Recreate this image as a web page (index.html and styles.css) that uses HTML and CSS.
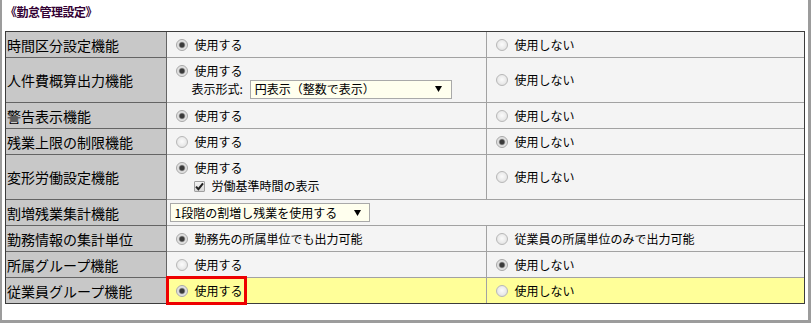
FILE: index.html
```html
<!DOCTYPE html>
<html lang="ja">
<head>
<meta charset="utf-8">
<title>勤怠管理設定</title>
<link rel="stylesheet" href="styles.css">
</head>
<body>
<div class="frame">
  <div class="title">《勤怠管理設定》</div>
  <div class="tablewrap">
    <table class="settings">
      <colgroup><col class="c-label"><col class="c-val"><col class="c-val2"></colgroup>
      <tr class="single">
        <th>時間区分設定機能</th>
        <td><span class="opt"><span class="radio on"></span>使用する</span></td>
        <td><span class="opt"><span class="radio"></span>使用しない</span></td>
      </tr>
      <tr class="double">
        <th>人件費概算出力機能</th>
        <td>
          <div class="stack">
            <span class="opt"><span class="radio on"></span>使用する</span>
            <span class="sub">表示形式:<span class="select w200">円表示（整数で表示）<svg class="arrow" width="7" height="6" viewBox="0 0 7 6"><path d="M0 0H7L3.5 6Z" fill="#000"/></svg></span></span>
          </div>
        </td>
        <td><span class="opt"><span class="radio"></span>使用しない</span></td>
      </tr>
      <tr class="single">
        <th>警告表示機能</th>
        <td><span class="opt"><span class="radio on"></span>使用する</span></td>
        <td><span class="opt"><span class="radio"></span>使用しない</span></td>
      </tr>
      <tr class="single">
        <th>残業上限の制限機能</th>
        <td><span class="opt"><span class="radio"></span>使用する</span></td>
        <td><span class="opt"><span class="radio on"></span>使用しない</span></td>
      </tr>
      <tr class="double">
        <th>変形労働設定機能</th>
        <td>
          <div class="stack">
            <span class="opt"><span class="radio on"></span>使用する</span>
            <span class="sub check-line"><span class="checkbox"><svg width="9" height="9" viewBox="0 0 9 9"><path d="M1 4.6L3.4 7.2L8 1.4" fill="none" stroke="#222" stroke-width="2"/></svg></span>労働基準時間の表示</span>
          </div>
        </td>
        <td><span class="opt"><span class="radio"></span>使用しない</span></td>
      </tr>
      <tr class="single">
        <th>割増残業集計機能</th>
        <td colspan="2" class="tight"><span class="select w199">1段階の割増し残業を使用する<svg class="arrow" width="7" height="6" viewBox="0 0 7 6"><path d="M0 0H7L3.5 6Z" fill="#000"/></svg></span></td>
      </tr>
      <tr class="single">
        <th>勤務情報の集計単位</th>
        <td><span class="opt"><span class="radio on"></span>勤務先の所属単位でも出力可能</span></td>
        <td><span class="opt"><span class="radio"></span>従業員の所属単位のみで出力可能</span></td>
      </tr>
      <tr class="single">
        <th>所属グループ機能</th>
        <td><span class="opt"><span class="radio"></span>使用する</span></td>
        <td><span class="opt"><span class="radio on"></span>使用しない</span></td>
      </tr>
      <tr class="single hl">
        <th>従業員グループ機能</th>
        <td class="marked"><span class="opt"><span class="radio on"></span>使用する</span><span class="redbox"></span></td>
        <td><span class="opt"><span class="radio"></span>使用しない</span></td>
      </tr>
    </table>
  </div>
</div>
</body>
</html>
```
FILE: styles.css
```css
html, body {
  margin: 0;
  padding: 0;
  background: #fff;
}
body {
  width: 811px;
  height: 323px;
  overflow: hidden;
  font-family: "Noto Sans CJK JP", "Noto Sans", sans-serif;
  color: #000;
}
.frame {
  box-sizing: border-box;
  width: 811px;
  height: 323px;
  border-left: 2px solid #9c9c9c;
  border-right: 3px solid #9c9c9c;
  border-bottom: 3px solid #9c9c9c;
  padding: 5px 0 0 3px;
  background: #fff;
}
.title {
  font-size: 12px;
  font-weight: bold;
  line-height: 14px;
  height: 14px;
  color: #330033;
  letter-spacing: -0.5px;
}
.tablewrap {
  margin-top: 12px;
  width: 800px;
  box-sizing: border-box;
  border: 1px solid #3c3c3c;
}
.settings {
  width: 798px;
  border-collapse: collapse;
  border-style: hidden;
  table-layout: fixed;
}
col.c-label { width: 160px; }
col.c-val { width: 320px; }
col.c-val2 { width: 318px; }
.settings th {
  background: #c8c8c8;
  border: 1px solid #646464;
  font-weight: normal;
  text-align: left;
  font-size: 14px;
  line-height: 16px;
  padding: 0 0 0 1px;
  white-space: nowrap;
}
.settings td {
  background: #f4f4f4;
  border: 1px solid #a2a2a2;
  font-size: 12px;
  line-height: 16px;
  padding: 0 0 0 9px;
  vertical-align: middle;
  white-space: nowrap;
}
.single th, .single td { height: 25px; }
.double th, .double td { height: 44px; }
.settings tr.hl td { background: #ffff99; }
.settings td.tight { padding-left: 3px; }
.settings td.marked { position: relative; }

.opt {
  display: flex;
  align-items: center;
}
.stack {
  display: flex;
  flex-direction: column;
}
.stack .opt { height: 18px; }
.sub {
  display: flex;
  align-items: center;
  margin-left: 16px;
  height: 19px;
}
.check-line { margin-left: 18px; }

.radio {
  flex: none;
  box-sizing: border-box;
  width: 12px;
  height: 12px;
  margin-right: 7px;
  border-radius: 50%;
  border: 1px solid #b8b8b8;
  background: radial-gradient(circle at 50% 45%, #fbfbfb 0, #ececec 50%, #d8d8d8 100%);
}
.radio.on {
  border-color: #a8a8a8;
  background: radial-gradient(circle at 50% 50%, #3a3a3a 0, #3a3a3a 2px, #8e8e8e 2.8px, #dcdcdc 3.6px, #f2f2f2 100%);
}
.checkbox {
  flex: none;
  box-sizing: border-box;
  width: 11px;
  height: 11px;
  margin-right: 7px;
  border: 1px solid #a0a0a0;
  border-radius: 1px;
  background: linear-gradient(#f4f4f4, #d8d8d8);
  display: flex;
  align-items: center;
  justify-content: center;
}
.select {
  display: inline-flex;
  align-items: center;
  justify-content: space-between;
  box-sizing: border-box;
  height: 19px;
  border: 1px solid #a9a9a9;
  background: #ffffee;
  padding: 0 8px 0 4px;
  font-size: 12px;
  line-height: 16px;
}
.sub .select { margin-left: 7px; }
.w200 { width: 202px; padding-right: 9px; }
.w199 { width: 200px; }
.arrow { flex: none; }
.redbox {
  position: absolute;
  left: -1px;
  top: -2px;
  width: 81px;
  height: 29px;
  box-sizing: border-box;
  border: 3px solid #ee0000;
  pointer-events: none;
}
```
